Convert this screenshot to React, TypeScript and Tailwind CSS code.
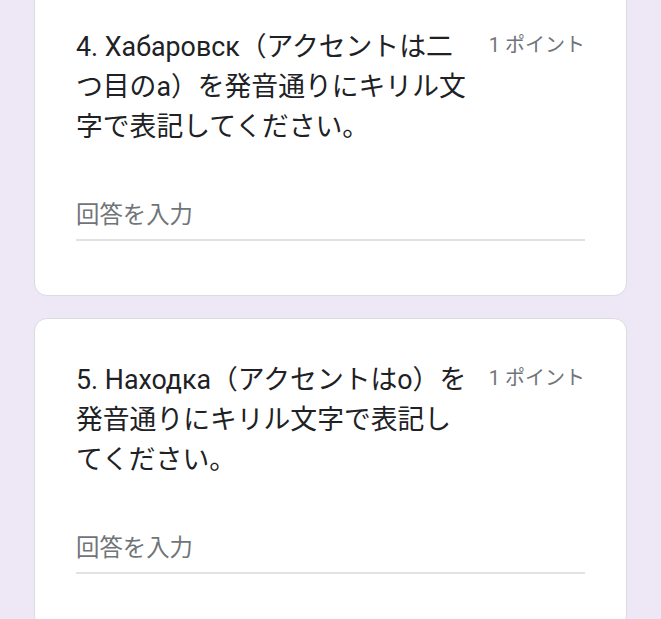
import React from "react";

const font = { fontFamily: 'Roboto, "Noto Sans CJK JP", "Noto Sans", sans-serif' };

function Card({ lines }: { lines: string[] }) {
  return (
    <div className="rounded-[13px] border border-[#dadce0] bg-white pl-[41px] pr-[41px] pt-[41px] pb-[54px]">
      <div className="flex items-start">
        <div className="w-[397px] text-[26.8px] leading-[40px] text-[#202124] whitespace-nowrap">
          {lines.map((l, i) => (
            <div key={i}>{l}</div>
          ))}
        </div>
        <div className="ml-auto text-[20px] leading-[36px] text-[#70757a] whitespace-nowrap">
          1 ポイント
        </div>
      </div>
      <div className="mt-[46px] flex h-[48px] items-center border-b-2 border-[#e2e2e2] text-[23.4px] text-[#70757a]">
        回答を入力
      </div>
    </div>
  );
}

export default function App() {
  return (
    <div className="h-screen overflow-hidden bg-[#ede7f6] px-[34px]" style={font}>
      <div className="mt-[-15px] flex flex-col gap-[22px]">
        <Card
          lines={[
            "4. Хабаровск（アクセントは二",
            "つ目のa）を発音通りにキリル文",
            "字で表記してください。",
          ]}
        />
        <Card
          lines={[
            "5. Находка（アクセントはo）を",
            "発音通りにキリル文字で表記し",
            "てください。",
          ]}
        />
      </div>
    </div>
  );
}
